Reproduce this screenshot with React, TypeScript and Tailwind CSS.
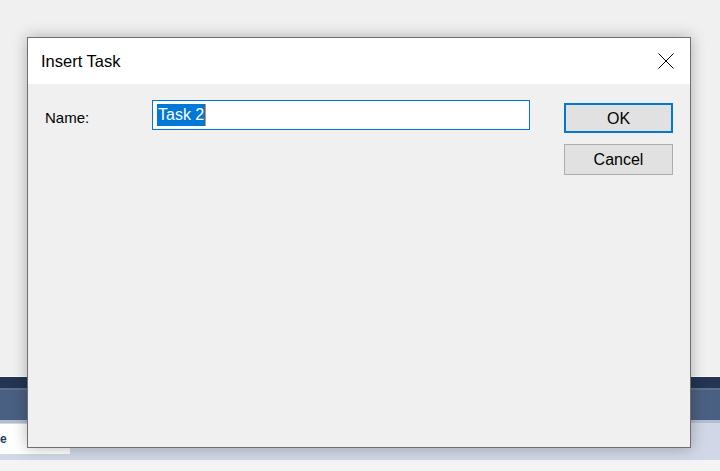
import React from 'react';

const CloseIcon: React.FC = () => (
  <svg width="16" height="16" viewBox="0 0 16 16" className="block">
    <path d="M0.5 0.5 L15.5 15.5 M15.5 0.5 L0.5 15.5" stroke="#000" strokeWidth="1" fill="none" />
  </svg>
);

export default function App() {
  return (
    <div
      className="relative w-[720px] h-[471px] overflow-hidden bg-[#f0f0f0] flex flex-col"
      style={{ fontFamily: '"Liberation Sans", Arial, sans-serif' }}
    >
      {/* background app behind the dialog */}
      <div className="h-[376px] shrink-0" />
      <div className="h-[1px] bg-[#fafafa]" />
      <div className="h-[11px] bg-[#233552]" />
      <div className="h-[2px] bg-[#5b7192]" />
      <div className="h-[30px] bg-[#4a6082]" />
      <div className="h-[3px] bg-[#b4bed2]" />
      <div className="h-[37px] bg-[#d1d7e6] flex items-start">
        <div className="w-[70px] h-[30px] mt-[1px] bg-white flex items-center overflow-hidden">
          <span className="text-[12px] font-bold text-[#1f3a64]">e</span>
        </div>
      </div>
      <div className="flex-1 bg-[#f4f4f4]" />

      {/* dialog window */}
      <div className="absolute left-[27px] top-[37px] w-[664px] h-[411px] border border-[#6f6f6f] bg-[#f0f0f0] flex flex-col shadow-[0_0_14px_rgba(0,0,0,0.28)]">
        <div className="h-[46px] shrink-0 bg-white flex items-center justify-between pl-[13px] pr-[16px]">
          <span className="text-[16.5px] text-black">Insert Task</span>
          <CloseIcon />
        </div>
        <div className="flex-1 flex pt-[16px] pl-[17px] pr-[17px]">
          <div className="w-[107px] pt-[10px] text-[15px] text-black leading-none">Name:</div>
          <div className="w-[378px] h-[30px] border border-[#0078d7] bg-white flex items-center pl-[4px]">
            <span className="bg-[#0078d7] text-white text-[16px] leading-[22px] px-[1px]">Task 2</span>
            <span className="w-[1px] h-[22px] bg-[#f08a30]" />
          </div>
          <div className="ml-auto flex flex-col gap-[11px] pt-[3px]">
            <button className="w-[109px] h-[30px] border-2 border-[#0078d7] bg-[#e1e1e1] text-[16px] text-black flex items-center justify-center pt-[1px]">
              OK
            </button>
            <button className="w-[109px] h-[31px] border border-[#adadad] bg-[#e1e1e1] text-[16px] text-black flex items-center justify-center pt-[1px]">
              Cancel
            </button>
          </div>
        </div>
      </div>
    </div>
  );
}
